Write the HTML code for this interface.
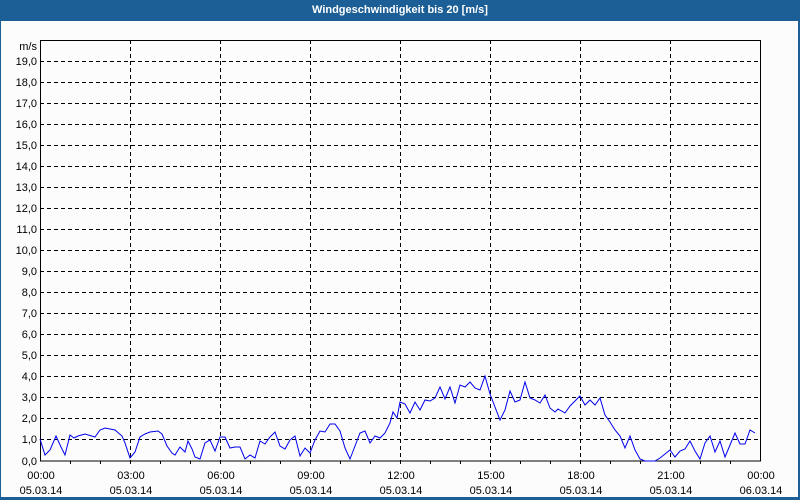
<!DOCTYPE html>
<html><head><style>
body{margin:0;width:800px;height:500px;overflow:hidden;background:#1c5f97;font-family:"Liberation Sans","DejaVu Sans",sans-serif}
#t{position:absolute;left:0;top:0;width:800px;height:21px;color:#fff;font-weight:bold;font-size:11px;text-align:center;line-height:21px}
#p{position:absolute;left:1px;top:21px;width:797px;height:476px;background:#fcfcfc}
svg{position:absolute;left:0;top:0}
</style></head><body>
<div id="t">Windgeschwindigkeit bis 20 [m/s]</div>
<div id="p"></div>
<svg width="800" height="500" font-family="Liberation Sans, DejaVu Sans, sans-serif" font-size="11">
<g stroke="#000" stroke-dasharray="4,3" stroke-width="1">
<line x1="40" y1="61.5" x2="760" y2="61.5"/><line x1="40" y1="82.5" x2="760" y2="82.5"/><line x1="40" y1="103.5" x2="760" y2="103.5"/><line x1="40" y1="124.5" x2="760" y2="124.5"/><line x1="40" y1="145.5" x2="760" y2="145.5"/><line x1="40" y1="166.5" x2="760" y2="166.5"/><line x1="40" y1="187.5" x2="760" y2="187.5"/><line x1="40" y1="208.5" x2="760" y2="208.5"/><line x1="40" y1="229.5" x2="760" y2="229.5"/><line x1="40" y1="250.5" x2="760" y2="250.5"/><line x1="40" y1="271.5" x2="760" y2="271.5"/><line x1="40" y1="292.5" x2="760" y2="292.5"/><line x1="40" y1="313.5" x2="760" y2="313.5"/><line x1="40" y1="334.5" x2="760" y2="334.5"/><line x1="40" y1="355.5" x2="760" y2="355.5"/><line x1="40" y1="376.5" x2="760" y2="376.5"/><line x1="40" y1="397.5" x2="760" y2="397.5"/><line x1="40" y1="418.5" x2="760" y2="418.5"/><line x1="40" y1="439.5" x2="760" y2="439.5"/>
<line x1="130.5" y1="40" x2="130.5" y2="461"/><line x1="220.5" y1="40" x2="220.5" y2="461"/><line x1="310.5" y1="40" x2="310.5" y2="461"/><line x1="400.5" y1="40" x2="400.5" y2="461"/><line x1="490.5" y1="40" x2="490.5" y2="461"/><line x1="580.5" y1="40" x2="580.5" y2="461"/><line x1="670.5" y1="40" x2="670.5" y2="461"/>
</g>
<rect x="40.5" y="40.5" width="720" height="420.5" fill="none" stroke="#000"/>
<g stroke="#000"><line x1="70.5" y1="461" x2="70.5" y2="464"/><line x1="100.5" y1="461" x2="100.5" y2="464"/><line x1="130.5" y1="461" x2="130.5" y2="464"/><line x1="160.5" y1="461" x2="160.5" y2="464"/><line x1="190.5" y1="461" x2="190.5" y2="464"/><line x1="220.5" y1="461" x2="220.5" y2="464"/><line x1="250.5" y1="461" x2="250.5" y2="464"/><line x1="280.5" y1="461" x2="280.5" y2="464"/><line x1="310.5" y1="461" x2="310.5" y2="464"/><line x1="340.5" y1="461" x2="340.5" y2="464"/><line x1="370.5" y1="461" x2="370.5" y2="464"/><line x1="400.5" y1="461" x2="400.5" y2="464"/><line x1="430.5" y1="461" x2="430.5" y2="464"/><line x1="460.5" y1="461" x2="460.5" y2="464"/><line x1="490.5" y1="461" x2="490.5" y2="464"/><line x1="520.5" y1="461" x2="520.5" y2="464"/><line x1="550.5" y1="461" x2="550.5" y2="464"/><line x1="580.5" y1="461" x2="580.5" y2="464"/><line x1="610.5" y1="461" x2="610.5" y2="464"/><line x1="640.5" y1="461" x2="640.5" y2="464"/><line x1="670.5" y1="461" x2="670.5" y2="464"/><line x1="700.5" y1="461" x2="700.5" y2="464"/><line x1="730.5" y1="461" x2="730.5" y2="464"/></g>
<polyline fill="none" stroke="#0000ee" stroke-width="1" points="40,439 45,455 50,450 56,436 61,447 65,455 70,435 74,438 78,436 85,434 95,437 100,430 105,428 115,430 122,436 125,443 130,458 135,452 140,437 145,434 150,432 158,431 162,434 167,446 172,453 175,455 180,447 185,452 188,441 192,449 195,457 200,459 205,443 210,440 215,451 220,437 225,437 230,448 235,447 240,447 245,459 250,455 255,458 260,441 265,444 270,437 275,432 280,446 285,449 290,440 295,436 300,456 305,448 310,453 315,440 320,431 325,432 330,424 335,424 340,431 345,448 350,459 355,446 360,433 365,431 370,443 375,436 380,438 385,433 390,423 393,412 397,418 400,402 405,404 410,413 415,402 420,410 425,400 430,401 435,398 440,387 445,399 450,387 455,403 460,385 465,387 470,382 475,388 480,390 485,376 490,394 500,420 505,410 510,391 515,402 520,400 525,382 530,398 535,400 540,403 545,395 550,408 555,412 558,409 565,413 570,406 575,401 580,396 585,405 590,400 595,405 600,398 605,415 610,422 615,430 620,436 625,448 630,436 635,450 640,459 645,461 655,461 660,458 665,454 670,450 675,457 680,451 685,449 690,441 695,451 700,459 705,443 710,436 715,452 720,441 725,457 735,433 740,444 745,444 750,430 755,433"/>
<g fill="#000" text-anchor="end">
<text x="37" y="50">m/s</text>
<text x="37" y="65">19,0</text><text x="37" y="86">18,0</text><text x="37" y="107">17,0</text><text x="37" y="128">16,0</text><text x="37" y="149">15,0</text><text x="37" y="170">14,0</text><text x="37" y="191">13,0</text><text x="37" y="212">12,0</text><text x="37" y="233">11,0</text><text x="37" y="254">10,0</text><text x="37" y="275">9,0</text><text x="37" y="296">8,0</text><text x="37" y="317">7,0</text><text x="37" y="338">6,0</text><text x="37" y="359">5,0</text><text x="37" y="380">4,0</text><text x="37" y="401">3,0</text><text x="37" y="422">2,0</text><text x="37" y="443">1,0</text><text x="37" y="465">0,0</text>
</g>
<g fill="#000" text-anchor="middle">
<text x="41" y="479">00:00</text><text x="131" y="479">03:00</text><text x="221" y="479">06:00</text><text x="311" y="479">09:00</text><text x="401" y="479">12:00</text><text x="491" y="479">15:00</text><text x="581" y="479">18:00</text><text x="671" y="479">21:00</text><text x="761" y="479">00:00</text>
<text x="41" y="494">05.03.14</text><text x="131" y="494">05.03.14</text><text x="221" y="494">05.03.14</text><text x="311" y="494">05.03.14</text><text x="401" y="494">05.03.14</text><text x="491" y="494">05.03.14</text><text x="581" y="494">05.03.14</text><text x="671" y="494">05.03.14</text><text x="761" y="494">06.03.14</text>
</g>
</svg>
</body></html>
